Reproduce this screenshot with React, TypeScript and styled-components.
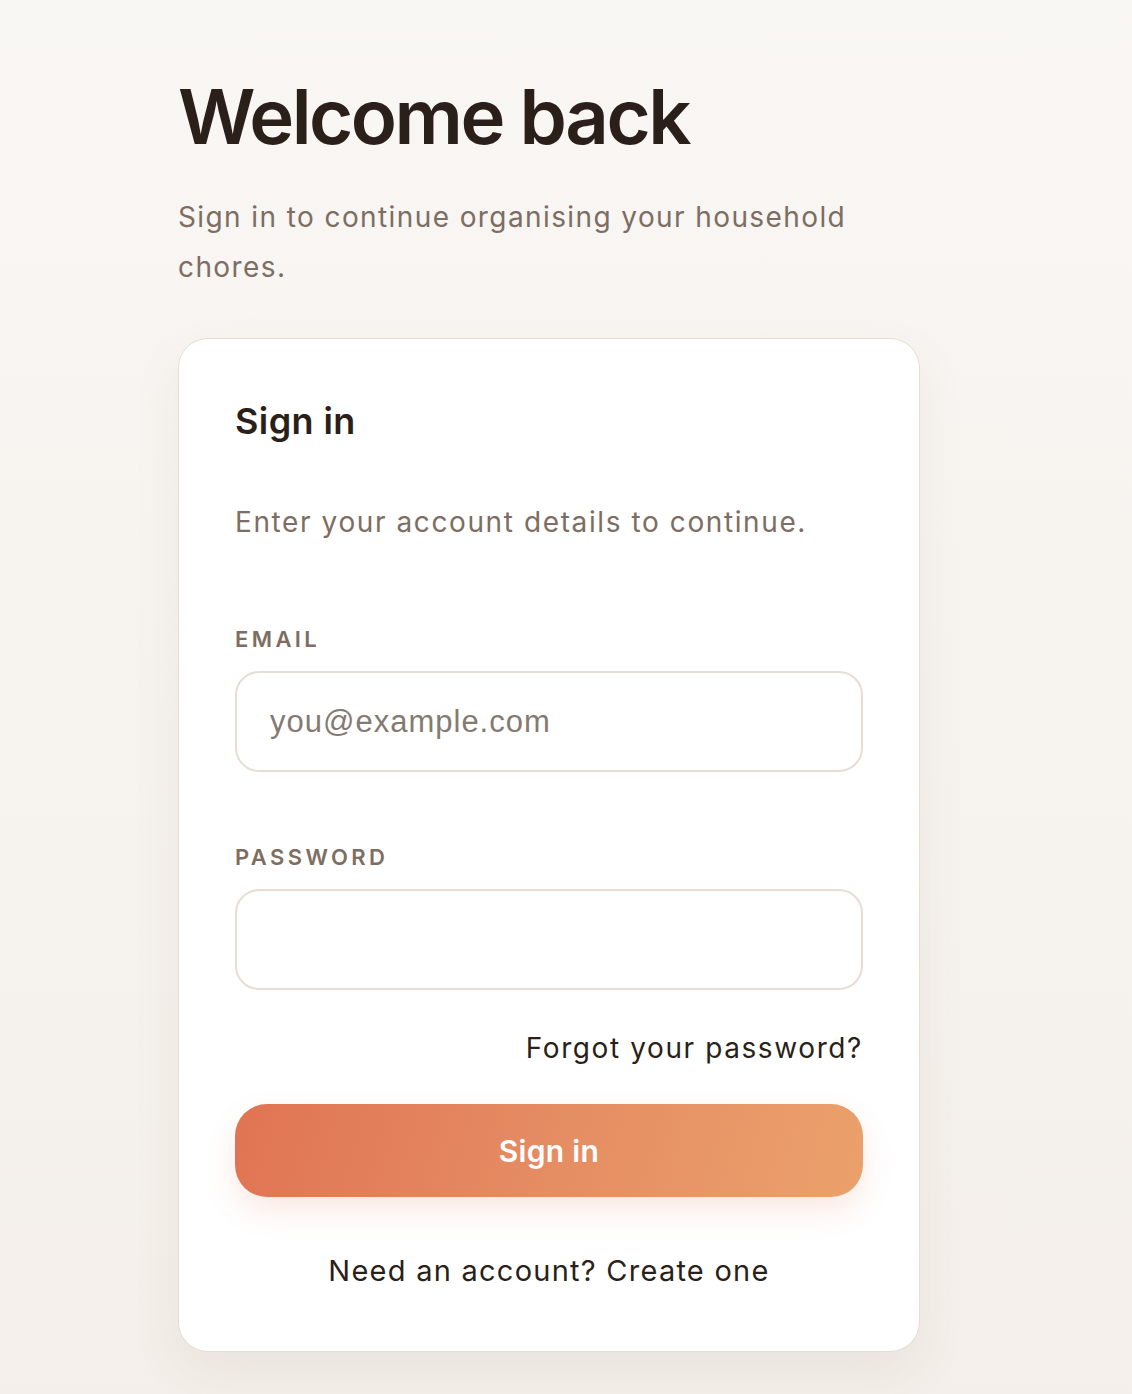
import * as React from 'react';
import styled, { createGlobalStyle } from 'styled-components';

const INK = '#2a1f19';
const MUTED = '#7d6d62';
const LINE = '#e7ddd5';

const GlobalStyle = createGlobalStyle`
  html, body {
    margin: 0;
    padding: 0;
  }
  body {
    background: linear-gradient(180deg, #f9f7f4 0%, #f4efea 100%);
    min-height: 1394px;
    font-family: Inter, "Noto Sans", sans-serif;
    color: ${INK};
  }
  * {
    box-sizing: border-box;
  }
`;

const Page = styled.main`
  padding: 72px 0 40px 178px;
  width: 960px;
`;

const Title = styled.h1`
  margin: 0;
  font-size: 76px;
  line-height: 88px;
  font-weight: 600;
  letter-spacing: -2.5px;
  color: ${INK};
`;

const Lead = styled.p`
  margin: 32px 0 0;
  font-size: 28px;
  line-height: 50px;
  letter-spacing: 1.4px;
  color: ${MUTED};
  max-width: 700px;
`;

const Card = styled.section`
  margin-top: 46px;
  width: 742px;
  padding: 58px 56px 60px;
  background: #fff;
  border: 1px solid ${LINE};
  border-radius: 30px;
  box-shadow: 0 20px 50px rgba(120, 90, 60, 0.08);
`;

const CardTitle = styled.h2`
  margin: 0;
  font-size: 36px;
  line-height: 48px;
  font-weight: 600;
  letter-spacing: 0.4px;
`;

const CardLead = styled.p`
  margin: 57px 0 0;
  font-size: 28px;
  line-height: 40px;
  letter-spacing: 1.6px;
  color: ${MUTED};
`;

const Form = styled.form`
  display: flex;
  flex-direction: column;
`;

const Field = styled.label<{ $top: number }>`
  display: flex;
  flex-direction: column;
  gap: 18px;
  margin-top: ${(p) => p.$top}px;
`;

const FieldLabel = styled.span`
  font-size: 22px;
  line-height: 28px;
  font-weight: 600;
  letter-spacing: 3.4px;
  color: ${MUTED};
`;

const Input = styled.input`
  width: 100%;
  height: 101px;
  padding: 0 33px;
  border: 2px solid ${LINE};
  border-radius: 24px;
  background: #fff;
  font-family: "Liberation Sans", Arial, sans-serif;
  font-size: 31px;
  letter-spacing: 1px;
  color: ${INK};
  outline: none;

  &::placeholder {
    color: #857a72;
  }
`;

const Forgot = styled.a`
  align-self: flex-end;
  margin-top: 38px;
  font-size: 28px;
  line-height: 40px;
  letter-spacing: 1.6px;
  color: ${INK};
  text-decoration: none;
`;

const Submit = styled.button`
  margin-top: 36px;
  height: 93px;
  border: none;
  border-radius: 32px;
  background: linear-gradient(105deg, #e07453 0%, #e58c63 50%, #eba16b 100%);
  box-shadow: 0 14px 30px rgba(226, 120, 80, 0.16);
  color: #fff;
  font-family: inherit;
  font-size: 30px;
  font-weight: 600;
  letter-spacing: 0.3px;
  cursor: pointer;
`;

const Footer = styled.p`
  margin: 54px 0 0;
  text-align: center;
  font-size: 29px;
  line-height: 40px;
  letter-spacing: 1.25px;
  color: ${INK};
`;

export default function App() {
  return (
    <>
      <GlobalStyle />
      <Page>
        <Title>Welcome back</Title>
        <Lead>Sign in to continue organising your household chores.</Lead>
        <Card>
          <CardTitle>Sign in</CardTitle>
          <CardLead>Enter your account details to continue.</CardLead>
          <Form onSubmit={(e) => e.preventDefault()}>
            <Field $top={83}>
              <FieldLabel>EMAIL</FieldLabel>
              <Input type="email" placeholder="you@example.com" />
            </Field>
            <Field $top={71}>
              <FieldLabel>PASSWORD</FieldLabel>
              <Input type="password" />
            </Field>
            <Forgot href="#">Forgot your password?</Forgot>
            <Submit type="submit">Sign in</Submit>
          </Form>
          <Footer>Need an account? Create one</Footer>
        </Card>
      </Page>
    </>
  );
}
